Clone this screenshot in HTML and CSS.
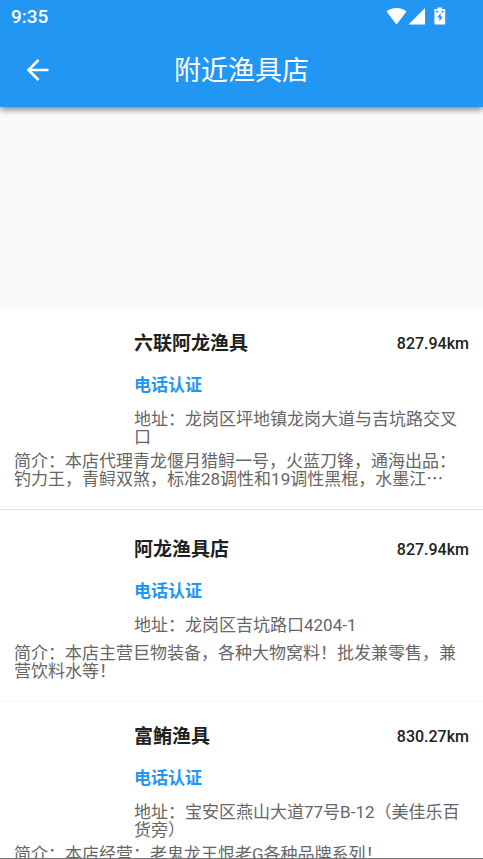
FILE: index.html
```html
<!DOCTYPE html>
<html lang="zh-CN">
<head>
<meta charset="utf-8">
<meta name="viewport" content="width=device-width, initial-scale=1">
<title>附近渔具店</title>
<link rel="stylesheet" href="styles.css">
</head>
<body>
<div class="screen">
  <header class="top">
    <div class="status">
      <span class="clock">9:35</span>
      <svg class="status-icons" width="62" height="20" viewBox="0 0 62 20" fill="#fff" aria-hidden="true">
        <path d="M0.500 5.600C3 3.400 6.400 2 10.500 2S18 3.400 20.500 5.600L10.500 18.500Z"/>
        <path d="M39 2V18.500H22.500Z"/>
        <path fill-rule="evenodd" d="M51.500 1.500h4.500v1.500h2.400q.8 0 .8.800v13.900q0 .8-.8.800h-9.200q-.8 0-.8-.800V3.800q0-.8.8-.800h2.300zM54.600 7l-3.400 4.500h2.200v4l3.400-5h-2.200zM50 4.500v2h2.500v-1h-1v-1zM57.500 4.500v2h-2.500v-1h1v-1z"/>
      </svg>
    </div>
    <div class="bar">
      <button class="back" type="button" aria-label="返回">
        <svg width="24" height="24" viewBox="0 0 24 24" fill="none" stroke="#fff" stroke-width="2.600" aria-hidden="true">
          <path d="M22.500 12H3M12.500 2L2.500 12L12.500 22"/>
        </svg>
      </button>
      <h1 class="title">附近渔具店</h1>
    </div>
  </header>
  <main class="content">
    <div class="banner"></div>
    <ul class="shops">
      <li class="shop">
        <div class="summary">
          <div class="heading"><h2 class="name">六联阿龙渔具</h2><span class="distance">827.94km</span></div>
          <p class="verified">电话认证</p>
          <p class="text">地址：龙岗区坪地镇龙岗大道与吉坑路交叉口</p>
        </div>
        <p class="text">简介：本店代理青龙偃月猎鲟一号，火蓝刀锋，通海出品：钓力王，青鲟双煞，标准28调性和19调性黑棍，水墨江⋯</p>
      </li>
      <li class="shop shop-light">
        <div class="summary">
          <div class="heading"><h2 class="name">阿龙渔具店</h2><span class="distance">827.94km</span></div>
          <p class="verified">电话认证</p>
          <p class="text">地址：龙岗区吉坑路口4204-1</p>
        </div>
        <p class="text">简介：本店主营巨物装备，各种大物窝料！批发兼零售，兼营饮料水等！</p>
      </li>
      <li class="shop">
        <div class="summary">
          <div class="heading"><h2 class="name">富鲔渔具</h2><span class="distance">830.27km</span></div>
          <p class="verified">电话认证</p>
          <p class="text">地址：宝安区燕山大道77号B-12（美佳乐百货旁）</p>
        </div>
        <p class="text">简介：本店经营：老鬼龙王恨老G各种品牌系列！</p>
      </li>
    </ul>
  </main>
</div>
</body>
</html>
```
FILE: styles.css
```css
* {
  box-sizing: border-box;
}

body,
h1,
h2,
p,
ul {
  margin: 0;
  padding: 0;
}

body {
  background: #fafafa;
  color: #212121;
  font-family: Roboto, "Noto Sans CJK SC", sans-serif;
}

.screen {
  display: flex;
  flex-direction: column;
  height: 100vh;
  overflow: hidden;
  border-bottom: 1px solid #757575;
}

.top {
  flex: none;
  z-index: 1;
  background: #2196f3;
  color: #fff;
  box-shadow: 0 3px 6px rgba(0, 0, 0, 0.45);
}

.status {
  display: flex;
  align-items: center;
  justify-content: space-between;
  height: 32px;
  padding: 0 35px 0 11px;
}

.clock {
  font-size: 19px;
  font-weight: 500;
}

.bar {
  display: grid;
  grid-template-columns: 48px 1fr 48px;
  align-items: center;
  height: 75px;
  padding: 0 14px;
}

.back {
  display: grid;
  place-items: center;
  height: 48px;
  padding: 0;
  border: 0;
  background: none;
}

.title {
  padding-top: 3px;
  font-size: 27px;
  font-weight: 400;
  line-height: 36px;
  text-align: center;
}

.content {
  flex: 1;
  min-height: 0;
  overflow: hidden;
}

.banner {
  height: 202px;
}

.shops {
  list-style: none;
  background: #fff;
}

.shop {
  padding: 15px 14px 21px;
  border-bottom: 1px solid #e0e0e0;
}

.shop-light {
  border-bottom-color: #f5f5f5;
}

.summary {
  display: flex;
  flex-direction: column;
  justify-content: center;
  min-height: 119px;
  padding: 8px 0 6px 120px;
}

.heading {
  display: flex;
  align-items: center;
  justify-content: space-between;
}

.name {
  font-size: 19px;
  font-weight: 700;
  line-height: 24px;
}

.distance {
  font-size: 16px;
  font-weight: 500;
  line-height: 24px;
}

.verified {
  margin: 17px 0 13px;
  color: #2196f3;
  font-size: 17px;
  font-weight: 700;
  line-height: 24px;
}

.text {
  color: #666;
  font-size: 17px;
  line-height: 18px;
}
```
